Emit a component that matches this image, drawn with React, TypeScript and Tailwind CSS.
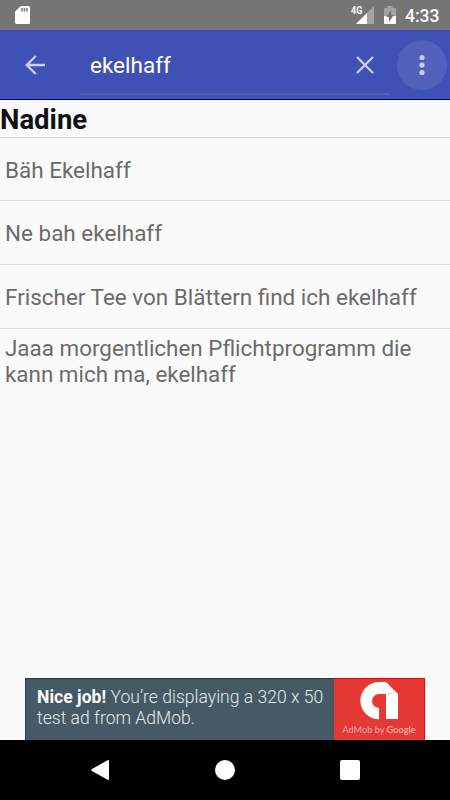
import React from 'react';

const messages = [
  { text: 'Bäh Ekelhaff', height: 'h-[63px]' },
  { text: 'Ne bah ekelhaff', height: 'h-[64px]' },
  { text: 'Frischer Tee von Blättern find ich ekelhaff', height: 'h-[64px]' },
];

function StatusBar() {
  return (
    <div className="flex h-[30px] items-center bg-[#757575] pl-[15px] pr-[10px] text-white">
      <svg width="15" height="18" viewBox="0 0 15 18">
        <path fillRule="evenodd" fill="currentColor" d="M6 0h7.5A1.5 1.5 0 0 1 15 1.5v15a1.500 1.500 0 0 1-1.500 1.500h-12A1.500 1.500 0 0 1 0 16.500V5.500ZM6.200 2v3.500h1.500V2ZM8.700 2v3.500h1.500V2ZM11.200 2v3.500h1.500V2Z" />
      </svg>
      <div className="ml-auto flex items-center">
        <div className="mt-[-9px] w-[12px] origin-left scale-x-[.86] whitespace-nowrap text-[10.5px] font-bold leading-[10px]">4G</div>
        <svg className="ml-[-7px]" width="18" height="18" viewBox="0 0 18 18">
          <path d="M0 18 18 0v18Z" fill="#a3a3a3" />
          <path d="M0 18 11 7v11Z" fill="white" />
        </svg>
        <svg className="ml-[10px]" width="12" height="18" viewBox="0 0 12 18">
          <path d="M3.500 0h5v2H11q1 0 1 1v7H0V3q0-1 1-1h2.500Z" fill="#a3a3a3" />
          <path d="M0 10h12v7q0 1-1 1H1q-1 0-1-1Z" fill="white" />
          <path d="M7.200 4 2.300 11h2.700v5l4.800-7H7.200Z" fill="#757575" />
        </svg>
        <div className="ml-[9px] mt-px w-[35px] whitespace-nowrap text-[17.500px] font-medium leading-[30px]">4:33</div>
      </div>
    </div>
  );
}

function SearchBar() {
  return (
    <div className="flex h-[70px] items-center border-b border-[#00008b] bg-[#3f51b5] text-[#c9cff0]">
      <svg className="ml-[25px] mt-px" width="20" height="20" viewBox="0 0 20 20" fill="none" stroke="currentColor" strokeWidth="2.300">
        <path d="M20 10H2M10.800 1 1.700 10l9.100 9" />
      </svg>
      <div className="mb-[4px] ml-[35px] flex h-[58px] w-[310px] items-center self-end border-b-2 border-[#4f60bb]">
        <span className="ml-[10px] flex-1 text-[22.500px] leading-[30px] text-white">ekelhaff</span>
        <svg className="mb-px mr-[16px]" width="18" height="18" viewBox="0 0 18 18" fill="none" stroke="currentColor" strokeWidth="2.300">
          <path d="m1 1 16 16M17 1 1 17" />
        </svg>
      </div>
      <div className="ml-[7.400px] mt-px flex size-[50px] shrink-0 items-center justify-center rounded-full bg-[#5262bc]">
        <svg width="6" height="22" viewBox="0 0 6 22" fill="currentColor">
          <circle cx="3" cy="3.500" r="2.600" />
          <circle cx="3" cy="11" r="2.600" />
          <circle cx="3" cy="18.500" r="2.600" />
        </svg>
      </div>
    </div>
  );
}

function AdBanner() {
  return (
    <div className="mx-[25px] mt-auto flex h-[62px] bg-[#455a64]">
      <div className="w-[309px] whitespace-nowrap border-l border-t border-[#263e4b] pl-[11px] pt-[8px] text-[17.500px] font-light leading-[21px] tracking-[.03px] text-[#e4eaed]">
        <b className="font-bold text-white">Nice job!</b> You’re displaying a 320 x 50<br />test ad from AdMob.
      </div>
      <div className="flex flex-1 flex-col items-center border-r border-t border-[#f00000] bg-[#e53935] pt-[3px]">
        <svg width="38" height="38" viewBox="0 0 38 38">
          <path fill="white" d="M19 0h7L38 12v25H26V12h-7a7 7 0 0 0 0 14v11.300A18.600 18.600 0 0 1 19 0Z" />
          <path d="M26 12h12L27 11Z" fill="#d8d8d8" />
        </svg>
        <div className="mt-[3px] whitespace-nowrap font-[Lato,sans-serif] text-[9.200px] leading-[13px] text-[#f5a5a3]">AdMob by <span className="font-semibold text-[#f7b3b1]">Google</span></div>
      </div>
    </div>
  );
}

export default function App() {
  return (
    <div className="flex h-[800px] w-[450px] flex-col overflow-hidden bg-[#fafafa] font-[Roboto,sans-serif]">
      <StatusBar />
      <SearchBar />
      <h1 className="h-[38px] border-b border-[#d8d8d8] text-[27.500px] font-bold leading-[40px] text-[#111]">Nadine</h1>
      {messages.map(({ text, height }) => (
        <div key={text} className={`${height} whitespace-nowrap border-b border-[#d8d8d8] pl-[5px] text-[22.480px] leading-[65px] text-[#6b6b6b]`}>{text}</div>
      ))}
      <div className="whitespace-nowrap pl-[5px] pt-[6.400px] text-[22.420px] leading-[26px] text-[#6b6b6b]">
        Jaaa morgentlichen Pflichtprogramm die<br />kann mich ma, ekelhaff
      </div>
      <AdBanner />
      <nav className="flex h-[60px] shrink-0 items-center bg-black text-white">
        <svg className="ml-[91px]" width="18" height="20" viewBox="0 0 18 20" fill="currentColor">
          <path d="M17 0q1 0 1 1v18q0 1-1 1L1 11Q-.5 10 1 9Z" />
        </svg>
        <div className="ml-[106px] size-[20px] rounded-full bg-white" />
        <div className="ml-[105px] size-[20px] rounded-[2px] bg-white" />
      </nav>
    </div>
  );
}
